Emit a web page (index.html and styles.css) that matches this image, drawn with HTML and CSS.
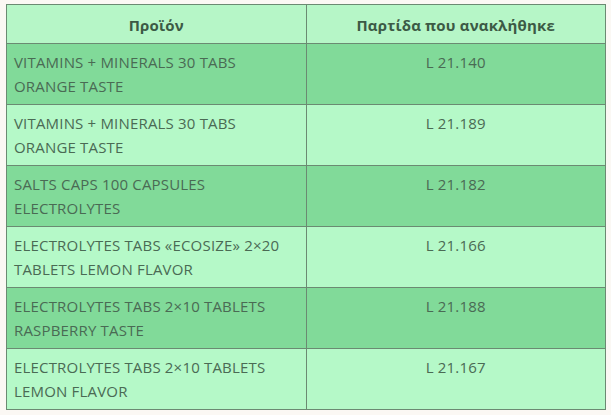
FILE: index.html
```html
<!DOCTYPE html>
<html lang="el">
<head>
<meta charset="utf-8">
<link rel="stylesheet" href="styles.css">
</head>
<body>
<table class="recall">
  <thead>
    <tr><th>Προϊόν</th><th>Παρτίδα που ανακλήθηκε</th></tr>
  </thead>
  <tbody>
    <tr class="dark"><td>VITAMINS + MINERALS 30 TABS ORANGE TASTE</td><td class="lot">L 21.140</td></tr>
    <tr class="light"><td>VITAMINS + MINERALS 30 TABS ORANGE TASTE</td><td class="lot">L 21.189</td></tr>
    <tr class="dark"><td>SALTS CAPS 100 CAPSULES ELECTROLYTES</td><td class="lot">L 21.182</td></tr>
    <tr class="light"><td>ELECTROLYTES TABS «ECOSIZE» 2×20 TABLETS LEMON FLAVOR</td><td class="lot">L 21.166</td></tr>
    <tr class="dark"><td>ELECTROLYTES TABS 2×10 TABLETS RASPBERRY TASTE</td><td class="lot">L 21.188</td></tr>
    <tr class="light"><td>ELECTROLYTES TABS 2×10 TABLETS LEMON FLAVOR</td><td class="lot">L 21.167</td></tr>
  </tbody>
</table>
</body>
</html>
```
FILE: styles.css
```css
html, body {
  background: #fbf8f4;
}
body {
  margin: 4px 0 0 6px;
  font-family: "Open Sans", "Noto Sans", sans-serif;
  font-size: 15px;
  line-height: 24px;
  letter-spacing: 0.18px;
  color: #4a6a54;
}
.recall {
  width: 600px;
  border-collapse: collapse;
  table-layout: fixed;
}
.recall th,
.recall td {
  border: 1px solid #6b8a72;
  width: 50%;
  vertical-align: top;
}
.recall th {
  background: #b6f6c7;
  color: #3c5a45;
  font-weight: 700;
  text-align: center;
  padding: 8px 7px 6px 7px;
}
.recall td {
  padding: 6px 7px 6px 7px;
  text-align: left;
}
.recall td.lot {
  text-align: center;
}
.recall tr.dark td {
  background: #81da99;
}
.recall tr.light td {
  background: #b5f9c8;
}
```
